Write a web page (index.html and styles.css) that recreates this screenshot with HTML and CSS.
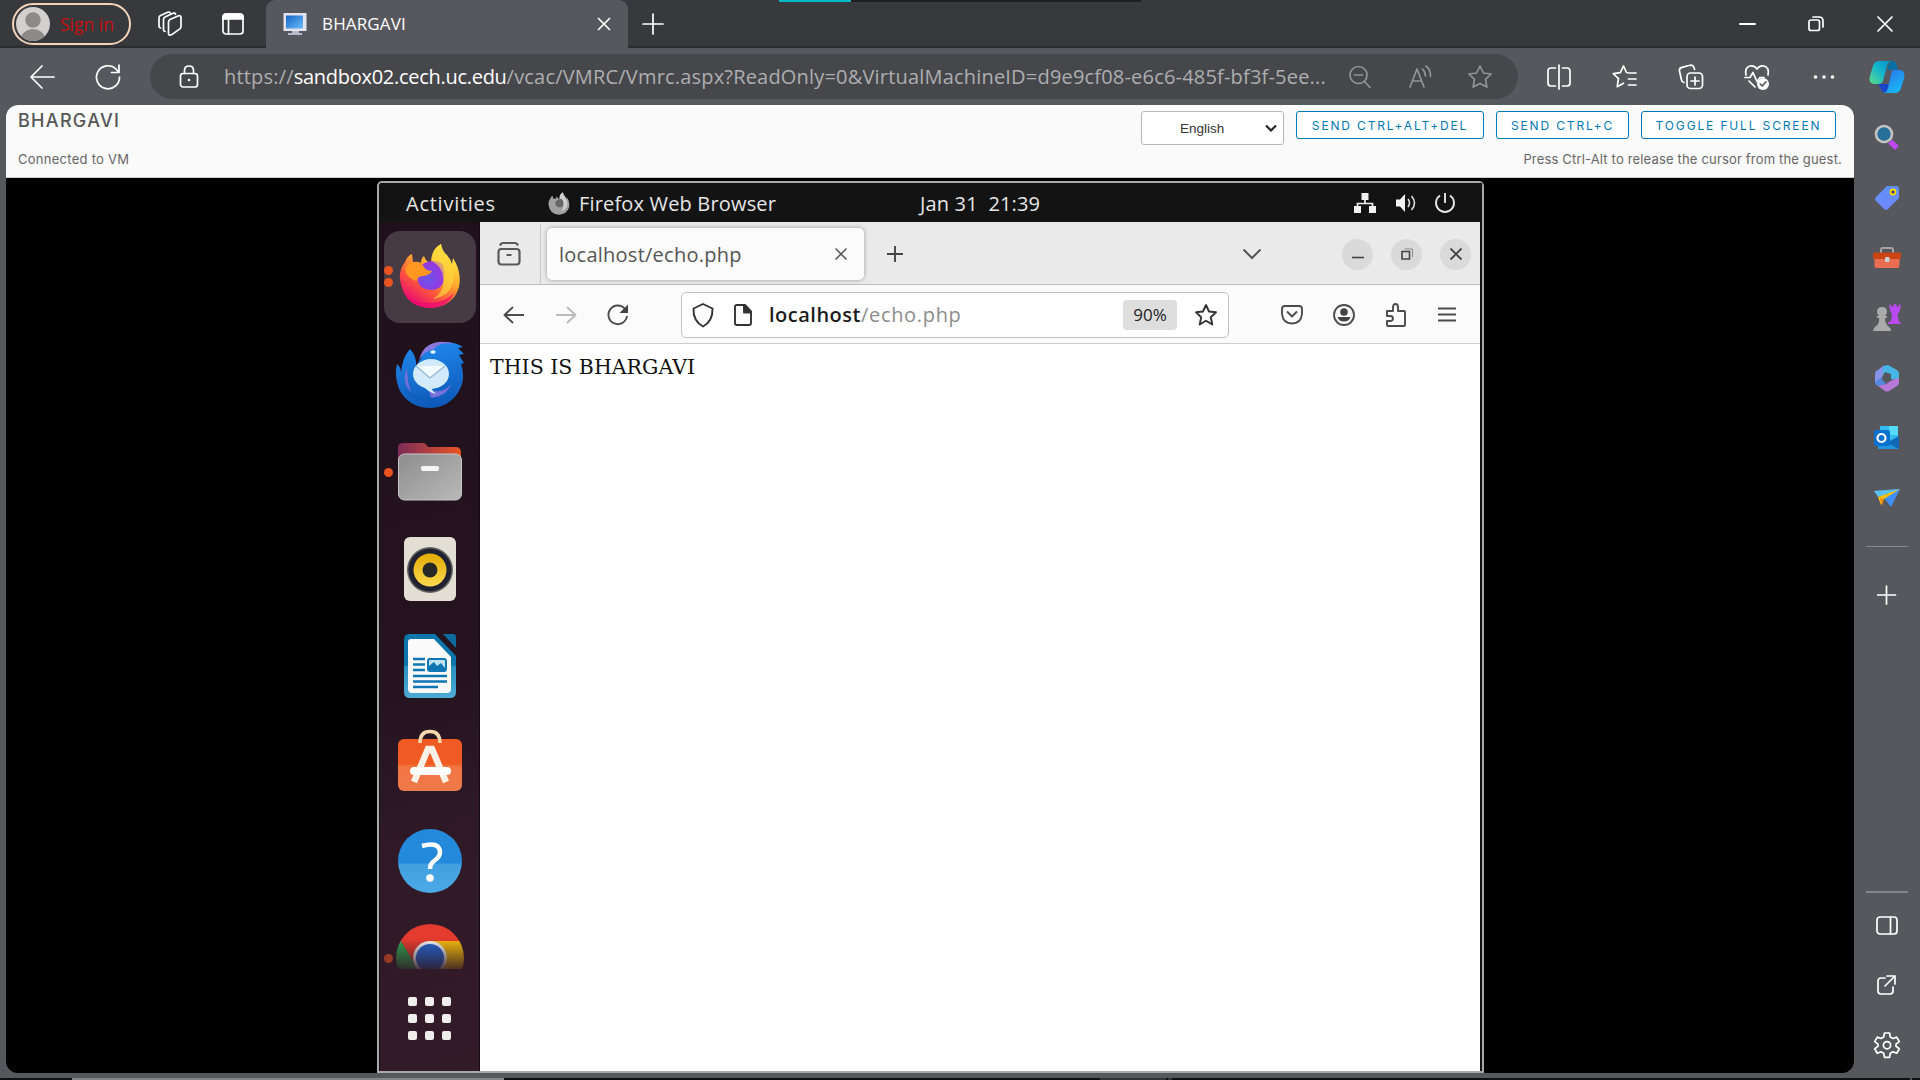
FILE: index.html
```html
<!DOCTYPE html>
<html lang="en">
<head>
<meta charset="utf-8">
<title>BHARGAVI</title>
<link rel="stylesheet" href="styles.css">
</head>
<body>
<div class="browser">
  <header class="tabbar">
    <div class="load-strip"><i></i></div>
    <div class="signin">
      <svg width="36" height="36" viewBox="0 0 36 36"><defs><clipPath id="av"><circle cx="18" cy="18" r="17"/></clipPath></defs><circle cx="18" cy="18" r="17" fill="#d2d0ce"/><g clip-path="url(#av)" fill="#8c8986"><circle cx="18" cy="14" r="7.7"/><ellipse cx="18" cy="33" rx="12" ry="10"/></g></svg>
      <span>Sign in</span>
    </div>
    <svg class="ic workspaces" width="28" height="28" viewBox="0 0 28 28"><path d="M12.500 12q0-1.700 1.500-2.400l8-3.600q2.700-1 3 1.200v9.300q0 1.500-1.200 2.400l-8 5.700q-3 1.700-3.300-1zM9 21.500q-1.500-.2-1.500-2v-10q0-1.700 1.500-2.500l8-3.700q2-.8 2.600 1M4.500 18q-1.500-.3-1.500-2V8q0-1.600 1.500-2.400l7.200-3.300q1.600-.6 2.500.5" fill="none"/></svg>
    <svg class="ic vertical" width="24" height="24" viewBox="0 0 24 24"><rect x="2" y="2" width="20" height="20" rx="3"/><path d="M2 7V5q0-3 3-3h14q3 0 3 3v2z" fill="#fff"/><path d="M7.500 7v15"/></svg>
    <div class="tab">
      <svg width="24" height="25" viewBox="0 0 24 25"><defs><linearGradient id="scr" x1="0" y1="0" x2="1" y2="1"><stop offset="0" stop-color="#1464c8"/><stop offset="1" stop-color="#6cbcf8"/></linearGradient></defs><rect x=".5" y="1" width="23" height="18" fill="#e4e4ee"/><rect x="3" y="3.500" width="17" height="13" fill="url(#scr)"/><path d="M9 19h7v2h3v2H5v-2h4z" fill="#b8b8cc"/></svg>
      <span class="tab-name">BHARGAVI</span>
      <svg class="ic" width="16" height="16" viewBox="0 0 16 16"><path d="M2.500 2.500l11 11M13.500 2.500l-11 11"/></svg>
    </div>
    <svg class="ic newtab" width="24" height="24" viewBox="0 0 24 24"><path d="M12 2v20M2 12h20"/></svg>
    <div class="winctl">
      <svg class="ic" width="18" height="18" viewBox="0 0 18 18"><path d="M2 9h15" stroke-width="2"/></svg>
      <svg class="ic" width="18" height="18" viewBox="0 0 18 18"><rect x="2" y="5" width="10.500" height="10.500" rx="2"/><path d="M6 2h6q4 0 4 4v6"/></svg>
      <svg class="ic" width="18" height="18" viewBox="0 0 18 18"><path d="M2 2l14 14M16 2L2 16"/></svg>
    </div>
  </header>

  <div class="toolbar">
    <div class="cell"><svg class="ic" width="28" height="26" viewBox="0 0 28 26"><path d="M26 13H3M14 2L3 13l11 11"/></svg></div>
    <div class="cell"><svg class="ic" width="28" height="28" viewBox="0 0 28 28"><path d="M25.500 14A11.500 11.500 0 1 1 22 6l2.500 3M25 2v7.500h-7.500"/></svg></div>
    <div class="address">
      <svg class="ic" width="20" height="26" viewBox="0 0 20 26"><rect x="1.500" y="9.500" width="17" height="13.500" rx="2.500"/><path d="M5.500 9.500V6.500q0-4.500 4.500-4.500t4.500 4.500v3"/><circle cx="10" cy="16" r="1.300" fill="#fff" stroke="none"/></svg>
      <span class="url">https://<b>sandbox02.cech.uc.edu</b>/vcac/VMRC/Vmrc.aspx?ReadOnly=0&amp;VirtualMachineID=d9e9cf08-e6c6-485f-bf3f-5ee...</span>
      <div class="acell"><svg class="ic dim" width="24" height="24" viewBox="0 0 24 24"><circle cx="10.500" cy="10" r="8.500"/><path d="M6.500 10h8M16.500 16.500L22 22.500"/></svg></div>
      <div class="acell"><svg class="ic dim" width="26" height="26" viewBox="0 0 26 26"><path d="M3 23L10 5l7 18M5.500 17h9M15.500 5q3 3 3 7M19 2q5 4 4.500 10.500"/></svg></div>
      <div class="acell"><svg class="ic dim" width="26" height="26" viewBox="0 0 26 26"><path d="M13 2l3.400 7 7.700 1-5.600 5.400 1.400 7.700L13 19.400l-6.900 3.700 1.400-7.700L1.900 10l7.700-1z"/></svg></div>
    </div>
    <div class="cell first"><svg class="ic" width="26" height="26" viewBox="0 0 26 26"><path d="M13 1v24M9.500 4H5Q2 4 2 7v12q0 3 3 3h4.500M16.500 4H21q3 0 3 3v12q0 3-3 3h-4.500"/></svg></div>
    <div class="cell"><svg class="ic" width="28" height="26" viewBox="0 0 28 26"><path d="M25 9h-7.500l-2-.5L12.500 2 9.300 8.700l-7 1 5.200 5-1.300 8 6.300-3.500M17.500 15H25M17.500 21H25"/></svg></div>
    <div class="cell"><svg class="ic" width="28" height="28" viewBox="0 0 28 28"><rect x="10" y="10" width="15.500" height="15.500" rx="3.500"/><path d="M18 14v8M14 18h8M7 19.500q-2-.3-2.500-2.500L2.500 8q-.5-3 2.500-3.700l8-2q3-.6 4 2.200l.6 2"/></svg></div>
    <div class="cell"><svg class="ic" width="28" height="28" viewBox="0 0 28 28"><path d="M3 12Q1.500 4.500 7 3q4.500-1 7 3 2.500-4 7-3 5.500 1.500 4 9M2 14.500h5l3-5 4 9 3-4h4M6 18l6 6"/><circle cx="20" cy="21" r="6" fill="#fff" stroke="none"/><path d="M17.300 21l2 2 3.500-4" stroke="#57585d"/></svg></div>
    <div class="cell"><svg width="24" height="6" viewBox="0 0 24 6"><g fill="#fff"><circle cx="3.500" cy="3" r="1.800"/><circle cx="12" cy="3" r="1.800"/><circle cx="20.500" cy="3" r="1.800"/></g></svg></div>
    <div class="cell"><svg width="36" height="34" viewBox="0 0 36 34"><defs><linearGradient id="cpa" x1="1" y1="0" x2="0" y2="1"><stop offset="0" stop-color="#0a8fcc"/><stop offset=".45" stop-color="#12b4cf"/><stop offset="1" stop-color="#5fdc86"/></linearGradient><linearGradient id="cpb" x1="0" y1="0" x2=".6" y2="1"><stop offset="0" stop-color="#2f6fe8"/><stop offset="1" stop-color="#17b8f5"/></linearGradient></defs><path d="M18 10l3-9q6-1 7 5l1 4z" fill="#0b6ea3"/><path d="M9 24h12l-4 9q-4 0-5-4z" fill="#1746c8"/><path d="M9 1h13q-3 1-4 5l-4 15q-1 3-5 3H5q-6-1-4-8L4 6q1-4 5-5z" fill="url(#cpa)"/><path d="M25 10h6q6 1 4 8l-3 10q-1 4-5 5H15q3-1 4-5l3-14q1-4 3-4z" fill="url(#cpb)"/></svg></div>
  </div>

  <div class="main">
    <div class="page">
      <div class="vm-header">
        <div class="left"><h1>BHARGAVI</h1><p class="status">Connected to VM</p></div>
        <div class="right">
          <div class="controls">
            <div class="select"><span>English</span><svg width="12" height="9" viewBox="0 0 12 9"><path d="M1 1.500l5 5 5-5" fill="none" stroke="#222" stroke-width="2.200"/></svg></div>
            <div class="btn b1">SEND CTRL+ALT+DEL</div>
            <div class="btn b2">SEND CTRL+C</div>
            <div class="btn b3">TOGGLE FULL SCREEN</div>
          </div>
          <p class="hint">Press Ctrl-Alt to release the cursor from the guest.</p>
        </div>
      </div>
      <div class="stage">
        <div class="desktop">
          <div class="topbar">
            <span class="activities">Activities</span>
            <svg class="ffgray" width="22" height="23" viewBox="0 0 62 66"><path d="M1 37Q0 26 6 19q2-6 7-8l1 8q5-1 8 1 0-5 3-7 2 6 7 7Q32 6 42 1q1 7 6 11 4 5 5 9l1-6q9 14 6 29-6 20-29 21Q5 64 1 37z" fill="#a0a0a0"/><path d="M33 18Q33 7 42 1q1 8 7 14 8 13 5 24-3 14-20 17 12-7 10-21 0-11-11-17z" fill="#cfcfcf"/><path d="M20 30Q24 22 34 20q9 0 9 8 3 16-11 16-11-1-12-14z" fill="#666"/></svg>
            <span class="appname">Firefox Web Browser</span>
            <span class="clock">Jan 31&nbsp; 21:39</span>
            <svg class="net" width="24" height="22" viewBox="0 0 24 22"><path d="M12 7v5M4.500 15v-3.500h15V15" fill="none" stroke="#eee" stroke-width="1.700"/><path d="M8.500 1h7v7h-7zM1 14h7v7H1zM16 14h7v7h-7z" fill="#f2f2f2"/></svg>
            <svg class="vol" width="24" height="22" viewBox="0 0 24 22"><path d="M2 7.500h4L11 2v18l-5-5.500H2z" fill="#f2f2f2"/><path d="M14 7q3 4 0 8M17.500 4q6 7 0 14" fill="none" stroke="#ddd" stroke-width="1.600"/></svg>
            <svg class="pow" width="22" height="22" viewBox="0 0 22 22"><path d="M6 3.500a9 9 0 1 0 10 0M11 1v10" fill="none" stroke="#e4e4e4" stroke-width="1.900"/></svg>
          </div>
          <div class="workspace">
            <nav class="dock">
              <div class="app active"><i class="dots two"></i>
                <svg width="62" height="66" viewBox="0 0 62 66"><defs><linearGradient id="ffa" x1=".85" y1=".1" x2=".25" y2="1"><stop offset="0" stop-color="#fff04a"/><stop offset=".35" stop-color="#ffb02e"/><stop offset=".65" stop-color="#ff5a3a"/><stop offset="1" stop-color="#e6007a"/></linearGradient><radialGradient id="ffb" cx=".4" cy=".6" r=".7"><stop offset="0" stop-color="#6a55ee"/><stop offset="1" stop-color="#a430d8"/></radialGradient></defs><path d="M1 37Q0 26 6 19q2-6 7-8l1 8q5-1 8 1 0-5 3-7 2 6 7 7Q32 6 42 1q1 7 6 11 4 5 5 9l1-6q9 14 6 29-6 20-29 21Q5 64 1 37z" fill="url(#ffa)"/><path d="M18 32Q21 18 34 18q11 0 11 9 3 20-14 20-13-1-13-15z" fill="url(#ffb)"/><path d="M6 26q6-10 9-6 6-2 10 4 2 4 8 4-2 4-8 5-7 0-7 5Q8 36 6 26z" fill="#ff9721"/><path d="M33 18Q33 7 42 1q1 8 7 14 8 13 5 24-3 14-20 17 12-7 10-21 0-11-11-17z" fill="#ffd83c" opacity=".65"/><path d="M4 46q6 15 27 14 18-1 25-12-7 17-25 17Q10 64 4 46z" fill="#ed0b70" opacity=".75"/></svg></div>
              <div class="app low">
                <svg width="70" height="68" viewBox="0 0 70 68"><defs><linearGradient id="tb" x1=".4" y1="0" x2=".6" y2="1"><stop offset="0" stop-color="#2088ec"/><stop offset="1" stop-color="#0d58b8"/></linearGradient></defs><path d="M2 23q4 3 4 9Q7 17 15 8q7 8 6 17l5-8Q31 1 50 1q10 0 18 5l-5 1 6 6-5 1 5 8-3 1q5 15-2 27-10 17-30 17Q13 66 4 48-1 36 2 23z" fill="url(#tb)"/><path d="M24 19Q28 3 43 1q10-1 15 2-14-2-19 5-10 2-15 11z" fill="#8877dc"/><path d="M12 27q-6 14 4 24-4-11-4-24zM34 50q16 2 22-7-4 12-20 14z" fill="#776fdc"/><path d="M8 47q17 14 47 8Q25 70 8 47z" fill="#0b57b4" opacity=".3"/><ellipse cx="36" cy="33" rx="18" ry="15" fill="#d3eafc"/><path d="M27 44q7 8 14 9-7-6-3-9z" fill="#d3eafc"/><path d="M21 25l14 12 15-12" fill="#f4fbff" stroke="#91b7d6" stroke-width="1.300"/><ellipse cx="38" cy="11" rx="2.700" ry="1.800" fill="#e5f6ff"/></svg></div>
              <div class="app files"><i class="dots"></i>
                <svg width="66" height="60" viewBox="0 0 66 60"><defs><linearGradient id="fa"><stop offset="0" stop-color="#7c2c58"/><stop offset=".5" stop-color="#b04040"/><stop offset="1" stop-color="#e95420"/></linearGradient><linearGradient id="fb" x2="1" y2="1"><stop offset="0" stop-color="#8d8d8d"/><stop offset="1" stop-color="#b9b9b9"/></linearGradient></defs><path d="M1 25V7q0-5 5-5h20q3 0 5 4h28q5 0 5 6v16z" fill="url(#fa)"/><rect x="1.500" y="13" width="63" height="46" rx="6" fill="url(#fb)" stroke="#c6c6c6"/><rect x="24" y="25" width="18" height="5" rx="2" fill="#f4f4f4"/></svg></div>
              <div class="app">
                <svg width="54" height="66" viewBox="0 0 54 66"><defs><linearGradient id="sp" x2="0" y2="1"><stop offset="0" stop-color="#e3ab05"/><stop offset="1" stop-color="#fcd94e"/></linearGradient></defs><rect x="1" y="1" width="52" height="64" rx="6" fill="#e3dfd4"/><circle cx="27" cy="34" r="23" fill="#646463"/><circle cx="27" cy="34" r="21.500" fill="#202232"/><circle cx="27" cy="34" r="16.500" fill="url(#sp)"/><circle cx="27" cy="34" r="7.500" fill="#282828"/></svg></div>
              <div class="app">
                <svg width="54" height="66" viewBox="0 0 54 66"><defs><linearGradient id="wr" x2="0" y2="1"><stop offset=".48" stop-color="#0c75aa"/><stop offset=".52" stop-color="#2a93c4"/><stop offset="1" stop-color="#4eabd4"/></linearGradient></defs><path d="M6 1h26l21 22v36q0 6-6 6H7q-6 0-6-6V7q0-6 5-6z" fill="url(#wr)"/><path d="M40 1h10q3 0 3 3v11z" fill="#0e6b9d"/><path d="M8 6h23l17 18v32q0 4-4 4H9q-4 0-4-4V9q0-3 3-3z" fill="#fafafa"/><g stroke="#0f76b4" stroke-width="2.700"><path d="M10 26h12M10 31.500h12M10 37h12M10 43h34M10 48.500h34M10 54h25"/></g><rect x="25" y="26" width="18" height="12" rx="2" fill="#bfe4f5" stroke="#1177b4" stroke-width="2"/><path d="M26 37v-4l5-4 3 4 4-3 4 5v2z" fill="#0f76b4"/></svg></div>
              <div class="app high">
                <svg width="66" height="64" viewBox="0 0 66 64"><defs><linearGradient id="so" x2="0" y2="1"><stop offset=".48" stop-color="#ef5b22"/><stop offset=".52" stop-color="#f27440"/><stop offset="1" stop-color="#ee7a4c"/></linearGradient></defs><rect x="1" y="11" width="64" height="52" rx="6" fill="url(#so)"/><path d="M23 15Q23 3.500 33 3.500T43 15" fill="none" stroke="#f4d9ad" stroke-width="3.500"/><path d="M17 54l14-33h4l14 33" fill="none" stroke="#fff0e7" stroke-width="6.500"/><rect x="13" y="39" width="41" height="8" rx="4" fill="#fff"/></svg></div>
              <div class="app">
                <svg width="66" height="66" viewBox="0 0 66 66"><defs><linearGradient id="hp" x2="0" y2="1"><stop offset=".53" stop-color="#2389da"/><stop offset=".55" stop-color="#429fe1"/><stop offset="1" stop-color="#4baae7"/></linearGradient></defs><circle cx="33" cy="33" r="32" fill="url(#hp)"/><path d="M25 18q17-5 18 6 0 5-6 9-4 3-4 8" fill="none" stroke="#fff" stroke-width="4.500"/><circle cx="33" cy="50" r="3.800" fill="#fff"/></svg></div>
              <div class="app chrome"><i class="dots faded"></i>
                <svg width="70" height="46" viewBox="0 0 70 46"><defs><clipPath id="cc"><circle cx="35" cy="35" r="34"/></clipPath><linearGradient id="fd" x2="0" y2="1"><stop offset=".35" stop-color="#2e1924" stop-opacity="0"/><stop offset="1" stop-color="#2e1924" stop-opacity=".85"/></linearGradient></defs><g clip-path="url(#cc)"><path fill="#e33b2e" d="M0 0h70v20H0z"/><path d="M0 12l6 6 20 30H0z" fill="#2fa04e"/><path d="M6 18h29v30H24z" fill="#e33b2e"/><path d="M35 18h35v30H35z" fill="#f2b90c"/></g><circle cx="35" cy="35" r="17" fill="#f0f0f0"/><circle cx="35" cy="35" r="14" fill="#2464d0"/><path fill="url(#fd)" d="M0 0h70v46H0z"/></svg></div>
              <div class="apps"><i></i><i></i><i></i><i></i><i></i><i></i><i></i><i></i><i></i></div>
            </nav>
            <div class="firefox">
              <div class="fftabs">
                <div class="archive"><svg width="26" height="26" viewBox="0 0 26 26"><path d="M4 4.500Q5 2 7 2h12q2 0 3 2.500M10.500 14h5" fill="none" stroke="#5a5a5a" stroke-width="2.200"/><rect x="2.500" y="8" width="21" height="15.500" rx="3" fill="none" stroke="#5a5a5a" stroke-width="2.200"/></svg></div>
                <div class="fftab"><span>localhost/echo.php</span><svg width="14" height="14" viewBox="0 0 14 14"><path d="M1.500 1.500l11 11M12.500 1.500l-11 11" stroke="#555" stroke-width="1.500"/></svg></div>
                <svg class="ffplus" width="18" height="18" viewBox="0 0 18 18"><path d="M9 1v16M1 9h16" stroke="#444" stroke-width="1.900"/></svg>
                <svg class="chev" width="20" height="12" viewBox="0 0 20 12"><path d="M1.500 1.500L10 10l8.500-8.500" fill="none" stroke="#555" stroke-width="2"/></svg>
                <div class="round"><svg width="14" height="14" viewBox="0 0 14 14"><path d="M1 10.500h12" stroke="#444" stroke-width="1.600"/></svg></div>
                <div class="round"><svg width="14" height="14" viewBox="0 0 14 14"><path d="M2 4.500h7.500V12H2z" fill="none" stroke="#444" stroke-width="1.600"/><path d="M4.500 2h8v8" fill="none" stroke="#888"/></svg></div>
                <div class="round"><svg width="14" height="14" viewBox="0 0 14 14"><path d="M1.500 1.500l11 11M12.500 1.500l-11 11" stroke="#444" stroke-width="1.800"/></svg></div>
              </div>
              <div class="ffnav">
                <div class="nc"><svg class="ni" width="22" height="20" viewBox="0 0 22 20"><path d="M21 10H2M10 2l-8.500 8 8.500 8"/></svg></div>
                <div class="nc"><svg class="ni off" width="22" height="20" viewBox="0 0 22 20"><path d="M1 10h19M12 2l8.500 8-8.500 8"/></svg></div>
                <div class="nc"><svg class="ni" width="24" height="24" viewBox="0 0 24 24"><path d="M21 13a9.300 9.300 0 1 1-2-7l2 2"/><path d="M22 1.500V10h-8.500z" fill="#444" stroke="none"/></svg></div>
                <div class="ffurl">
                  <svg class="ni dk" width="24" height="26" viewBox="0 0 24 26"><path d="M12 2l9.500 4.500Q22 19 12 24.500 2 19 2.500 6.500z"/></svg>
                  <svg class="ni dk pg" width="20" height="24" viewBox="0 0 20 24"><path d="M4 2h8l6 6.500V20q0 2-2 2H4q-2 0-2-2V4q0-2 2-2z"/><path d="M11 2v7.500h7z" fill="#333"/></svg>
                  <span><b>localhost</b>/echo.php</span>
                  <em>90%</em>
                  <svg class="ni dk" width="24" height="24" viewBox="0 0 24 24"><path d="M12 2l3 6.500 7 .8-5.200 4.900 1.500 7.300L12 17.800l-6.300 3.700 1.500-7.300L2 9.300l7-.8z"/></svg>
                </div>
                <div class="nc p"><svg class="ni" width="22" height="22" viewBox="0 0 22 22"><path d="M4 2h14q3 0 3 3v5q-1 9.500-10 9.500T1 10V5q0-3 3-3zM6 7.500l5 5 5-5"/></svg></div>
                <div class="nc"><svg class="ni" width="24" height="24" viewBox="0 0 24 24"><circle cx="12" cy="12" r="10"/><circle cx="12" cy="9" r="3.800" fill="#444" stroke="none"/><path d="M5.500 14h13Q17 18.500 12 18.500T5.500 14z" fill="#444" stroke="none"/></svg></div>
                <div class="nc"><svg class="ni" width="24" height="26" viewBox="0 0 24 26"><path d="M3 9h6V5q0-3 2.500-3T14 5v4h6q1 0 1 1v13q0 1-1 1H4q-1 0-1-1v-4h3q3 0 3-2.500T6 14H3z"/></svg></div>
                <div class="nc menu"><svg class="ni" width="20" height="20" viewBox="0 0 20 20"><path d="M1 3.500h18M1 9.500h18M1 15.500h18"/></svg></div>
              </div>
              <div class="document">THIS IS BHARGAVI</div>
            </div>
          </div>
        </div>
      </div>
    </div>
    <aside class="rail">
      <div><svg width="28" height="28" viewBox="0 0 28 28"><path d="M17 17.500l7 6.500" stroke="#bf48ef" stroke-width="5.500"/><circle cx="11" cy="10" r="8" fill="#28709c" stroke="#c4c4c4" stroke-width="2.600"/></svg></div>
      <div><svg width="26" height="26" viewBox="0 0 26 26"><defs><linearGradient id="tg" x2="0" y2="1"><stop offset="0" stop-color="#5e91f8"/><stop offset="1" stop-color="#7287fc"/></linearGradient></defs><path d="M13 1h9q3 0 3 3v9L14 24q-2 2-4 0L2 16q-2-2 0-4z" fill="url(#tg)"/><circle cx="19" cy="7" r="2.500" fill="#293878" stroke="#ffd500" stroke-width="1.800"/></svg></div>
      <div><svg width="28" height="24" viewBox="0 0 28 24"><path d="M8 8V4q0-2 2-2h8q2 0 2 2v4" fill="none" stroke="#a5a5a5" stroke-width="2"/><rect x="1.500" y="10" width="25" height="12" rx="2" fill="#e96d50"/><path d="M0 8q0-1.500 1.500-1.500h25Q28 6.500 28 8v5H0z" fill="#ca4416"/><rect x="12" y="11" width="4.500" height="5" rx="1" fill="#c9d1d4"/></svg></div>
      <div><svg width="28" height="28" viewBox="0 0 28 28"><path d="M16 1l2-.5.500 2.500 2-.5V0h3v2.500l2 .5L26 .5l2 .5-1.500 7-2 2 1 7 2 1.500V20H15v-1.500l3-1.500 1-7-1.500-2z" fill="#b94af1"/><path d="M9 3q5 0 5 5 0 2-2 4h2v2h-2q0 6 4 9 2 1 2 4H0q0-3 3-5 4-3 3-8H4v-2h2Q4 10 4 8q0-5 5-5z" fill="#aaa"/></svg></div>
      <div><svg width="26" height="28" viewBox="0 0 26 28"><path d="M9 2l5-1 9 5q2 1 2 4v6l-8-1V10l-6-2-3 5z" fill="#45b6e6"/><path d="M10 2L2 7Q1 8 1 11v7q0 3 3 4l3 1 5-4-4-3V9z" fill="#5487de"/><path d="M9 2v8l-1 3-7 5v-7q0-3 2-4z" fill="#8794e8"/><path d="M25 14v5q0 2-2 3l-8 5q-2 1-4 0l-7-5 8-2 6-4z" fill="#b679d5"/></svg></div>
      <div><svg width="26" height="26" viewBox="0 0 26 26"><path d="M6 1h18v17H6z" fill="#35b9f1"/><path d="M15 1h9v9h-9z" fill="#54dafa"/><path d="M4 14l10 3 11-6v13H4z" fill="#2394df"/><path d="M13 18l12-7v13z" fill="#1268b5"/><rect x="0" y="5" width="16" height="16" rx="2" fill="#0872ce"/><circle cx="7.500" cy="13" r="4" fill="none" stroke="#fff" stroke-width="2.200"/></svg></div>
      <div><svg width="28" height="22" viewBox="0 0 28 22"><path d="M1 4L27 2 18 20l-7-9z" fill="#408ff5"/><path d="M1 4l26-2L5 10z" fill="#59c2ed"/><path d="M5 10l22-8-16 10-3 6z" fill="#ffc20e"/><path d="M7 11l4 1-2 7z" fill="#e28b13"/></svg></div>
      <div class="rule"><hr></div>
      <div><svg class="ic" width="20" height="20" viewBox="0 0 20 20"><path d="M9.500 1v18M.5 10h18"/></svg></div>
      <div class="bottom-rule"><hr></div>
      <div><svg class="ic" width="24" height="22" viewBox="0 0 24 22"><rect x="2" y="3" width="20" height="17" rx="3"/><path d="M15.500 3v17"/></svg></div>
      <div><svg class="ic" width="22" height="22" viewBox="0 0 22 22"><path d="M9 4H5Q2 4 2 7v10q0 3 3 3h9q3 0 3-3v-4M11 2h8v8M9 12L19 2"/></svg></div>
      <div><svg class="ic" width="28" height="28" viewBox="0 0 28 28"><path d="M11.500 2h5l.8 4 2.700 1.500 3.700-1.400 2.600 4.500L23 13.200v2l3.300 2.500-2.600 4.500-3.700-1.400-2.700 1.500-.8 4h-5l-.8-4L8 20.800l-3.700 1.400-2.600-4.500L5 15.200v-2l-3.300-2.600 2.600-4.500L8 7.500 10.700 6z"/><circle cx="14" cy="14.200" r="3.600"/></svg></div>
    </aside>
  </div>
  <footer class="taskbar"><i class="t1"></i><i class="t2"></i><i class="t3"></i><i class="t4"></i></footer>
</div>
</body>
</html>
```
FILE: styles.css
```css
* { box-sizing: border-box; margin: 0; }
body { font-family: "Open Sans", sans-serif; background: #57585d; overflow: hidden; }
svg { display: block; flex: none; }
span, p, h1, .btn, em, .document { white-space: nowrap; }
.browser { width: 1920px; height: 1080px; display: flex; flex-direction: column; background: #57585d; }
.ic { fill: none; stroke: #fff; stroke-width: 1.7; stroke-linecap: round; stroke-linejoin: round; }
.dim { stroke: #929397; }

.tabbar { position: relative; height: 48px; flex: none; display: flex; align-items: center; background: #38393c; box-shadow: inset 0 -2px 1px #2c2d30; padding-left: 12px; }
.load-strip { position: absolute; left: 779px; top: 0; width: 362px; height: 2px; background: #1f201f; }
.load-strip i { display: block; width: 72px; height: 2px; background: #00b7c3; }
.signin { width: 119px; height: 42px; border: 2px solid #f3d4ba; border-radius: 21px; display: flex; align-items: center; padding-left: 1px; gap: 9px; font-size: 17.500px; color: #c90f0f; }
.workspaces { margin-left: 25px; }
.vertical { margin-left: 37px; }
.tab { width: 362px; height: 48px; margin-left: 21px; background: #57585d; border-radius: 9px 9px 0 0; display: flex; align-items: center; padding: 0 16px 0 17px; color: #fff; font-size: 17px; }
.tab-name { margin: -1px auto 0 15px; letter-spacing: .15px; }
.newtab { margin-left: 13px; }
.winctl { display: flex; margin-left: auto; gap: 51px; padding-right: 26px; }

.toolbar { height: 57px; flex: none; display: flex; align-items: center; padding-left: 9px; }
.cell { width: 66px; display: flex; justify-content: center; flex: none; }
.cell.first ~ .cell { width: 66.200px; }
.cell.cell:last-child { width: 60px; }
.cell.first { margin-left: 8px; }
.address { width: 1368px; height: 45px; margin-left: 9px; border-radius: 23px; background: #46474b; display: flex; align-items: center; padding: 0 8px 0 29px; }
.url { margin: 0 auto 0 25px; font-size: 20px; color: #adaeb1; letter-spacing: .19px; }
.url b { color: #fff; font-weight: 400; letter-spacing: -.28px; }
.acell { width: 60px; display: flex; justify-content: center; }

.main { height: 968px; display: flex; padding-left: 6px; flex: none; }
.page { width: 1848px; height: 968px; border-radius: 12px; overflow: hidden; background: #000; display: flex; flex-direction: column; }
.vm-header { height: 73px; flex: none; background: #fafafa; border-bottom: 1px solid #ccc; display: flex; justify-content: space-between; padding: 6px 12px 0; font-family: "Inter", sans-serif; color: #565656; }
h1 { font-size: 18px; line-height: 20px; font-weight: 500; letter-spacing: 1.3px; }
.status, .hint { font-size: 13px; line-height: 16px; color: #666; }
.status { margin-top: 20px; letter-spacing: .27px; }
.hint { text-align: right; margin-top: 6px; letter-spacing: .17px; }
.controls { display: flex; height: 34px; align-items: flex-start; gap: 12px; padding-right: 6px; }
.select { width: 143px; height: 34px; background: #fff; border: 1px solid #b8b8b8; border-radius: 3px; display: flex; align-items: center; justify-content: space-between; padding: 0 6px 0 38px; font: 13.500px "Liberation Sans", sans-serif; color: #333; }
.btn { height: 28px; border: 1px solid #0079b8; border-radius: 3px; color: #0079b8; background: #fff; font-size: 12px; line-height: 27px; text-align: center; letter-spacing: 1.85px; }
.b1 { width: 188px; } .b2 { width: 133px; } .b3 { width: 195px; }

.stage { flex: 1; padding: 3px 0 0 371px; }
.desktop { width: 1107px; height: 892px; border: 2px solid #a8a8a8; border-radius: 5px 5px 0 0; background: #131313; display: flex; flex-direction: column; padding-left: 1px; }
.topbar { height: 39px; flex: none; background: #131313; display: flex; align-items: center; padding: 1px 0 0 26px; color: #e6e6e6; font-size: 20px; font-weight: 500; }
.activities { width: 91px; letter-spacing: .75px; }
.ffgray { margin-left: 51px; }
.appname { margin-left: 9px; width: 201px; letter-spacing: .17px; }
.clock { margin-left: 140px; width: 123px; letter-spacing: .15px; }
.net { margin-left: 310px; } .vol { margin-left: 17px; } .pow { margin-left: 16px; }
.workspace { display: flex; height: 849px; }
.dock { width: 100px; background: linear-gradient(165deg, #1f101b 0%, #251420 55%, #311a28 75%, #321a27 100%); display: flex; flex-direction: column; align-items: center; padding-top: 9px; flex: none; border-right: 1px solid #140a11; }
.app { position: relative; width: 92px; height: 92px; margin-bottom: 5.300px; display: flex; justify-content: center; align-items: center; border-radius: 16px; flex: none; }
.app.active { background: #463a43; padding-bottom: 2px; }
.app.low { padding-top: 2px; }
.app.files { padding-bottom: 2px; }
.app.high { padding-bottom: 7px; }
.dots { position: absolute; left: 0; top: 42px; width: 9px; height: 9px; border-radius: 50%; background: #e95420; }
.dots.two { top: 35px; box-shadow: 0 12px #e95420; }
.dots.faded { opacity: .55; top: 42px; }
.app.chrome { align-items: flex-start; height: 60px; padding-top: 11px; margin: 0 0 25px; }
.apps { display: grid; grid-template-columns: repeat(3, 9px); gap: 8.200px; }
.apps i { width: 9px; height: 9px; border-radius: 2px; background: #efeeed; }

.firefox { width: 1000px; display: flex; flex-direction: column; background: #fff; }
.fftabs { height: 63px; flex: none; background: #eaeaea; border-bottom: 1px solid #bdbdbd; display: flex; align-items: center; padding-top: 2px; }
.archive { width: 61px; height: 60px; border-right: 1px solid #c9c9c9; display: flex; align-items: center; justify-content: center; padding-right: 3px; }
.fftab { width: 317px; height: 52px; margin-left: 6px; border-radius: 5px; background: #fbfbfb; box-shadow: 0 0 4px #999; display: flex; align-items: center; justify-content: space-between; padding: 0 16px 0 12px; font-size: 20px; font-weight: 500; color: #555; letter-spacing: .25px; }
.ffplus { margin-left: 22px; }
.chev { margin: 0 80px 0 auto; }
.round { width: 31px; height: 31px; border-radius: 50%; background: #dadada; display: flex; align-items: center; justify-content: center; margin-right: 18px; }
.round:last-child { margin-right: 9px; }
.ffnav { height: 59px; flex: none; background: #fbfbfb; border-bottom: 1px solid #ccc; display: flex; align-items: center; padding: 1px 0 0 8px; }
.nc { width: 52px; display: flex; justify-content: center; flex: none; }
.nc.p { margin-left: 37px; }
.nc.menu { padding-right: 2px; }
.ni { fill: none; stroke: #4c4c4c; stroke-width: 1.9; stroke-linejoin: round; }
.off { stroke: #bbb; }
.dk { stroke: #333; }
.ffurl { width: 548px; height: 46px; margin-left: 37px; border: 1px solid #c2c2c2; border-radius: 5px; background: #fff; display: flex; align-items: center; padding: 0 10px 0 9px; font-size: 20px; color: #8c8c8c; }
.pg { margin-left: 18px; }
.ffurl span { margin: 0 auto 0 16px; letter-spacing: .68px; }
.ffurl b { font-weight: 550; color: #1c1c1c; letter-spacing: .5px; }
.ffurl em { width: 54px; height: 30px; border-radius: 4px; background: #dedede; font-style: normal; font-weight: 500; font-size: 17px; line-height: 30px; text-align: center; color: #222; margin-right: 17px; }
.document { padding: 8px 10px; font-family: "DejaVu Serif", serif; font-size: 20.500px; line-height: 30px; color: #111; }

.rail { width: 66px; display: flex; flex-direction: column; padding-top: 3px; flex: none; height: 970px; }
.rail div { height: 60px; display: flex; align-items: center; justify-content: center; flex: none; }
.rail hr { width: 42px; height: 1px; border: 0; background: #85868a; }
.rail .rule { height: 37px; }
.rail .bottom-rule { height: 6px; margin-top: auto; }
.bottom-rule hr { height: 2px; }
.taskbar { height: 2px; margin-top: auto; background: #101010; display: flex; }
.taskbar i { height: 2px; }
.t1 { width: 432px; margin-left: 72px; background: #858585; }
.t2 { width: 66px; margin-left: 596px; background: #333; }
.t3 { width: 4px; margin-left: 2px; background: #333; }
.t4 { width: 2px; margin-left: 738px; background: #555; }
```
